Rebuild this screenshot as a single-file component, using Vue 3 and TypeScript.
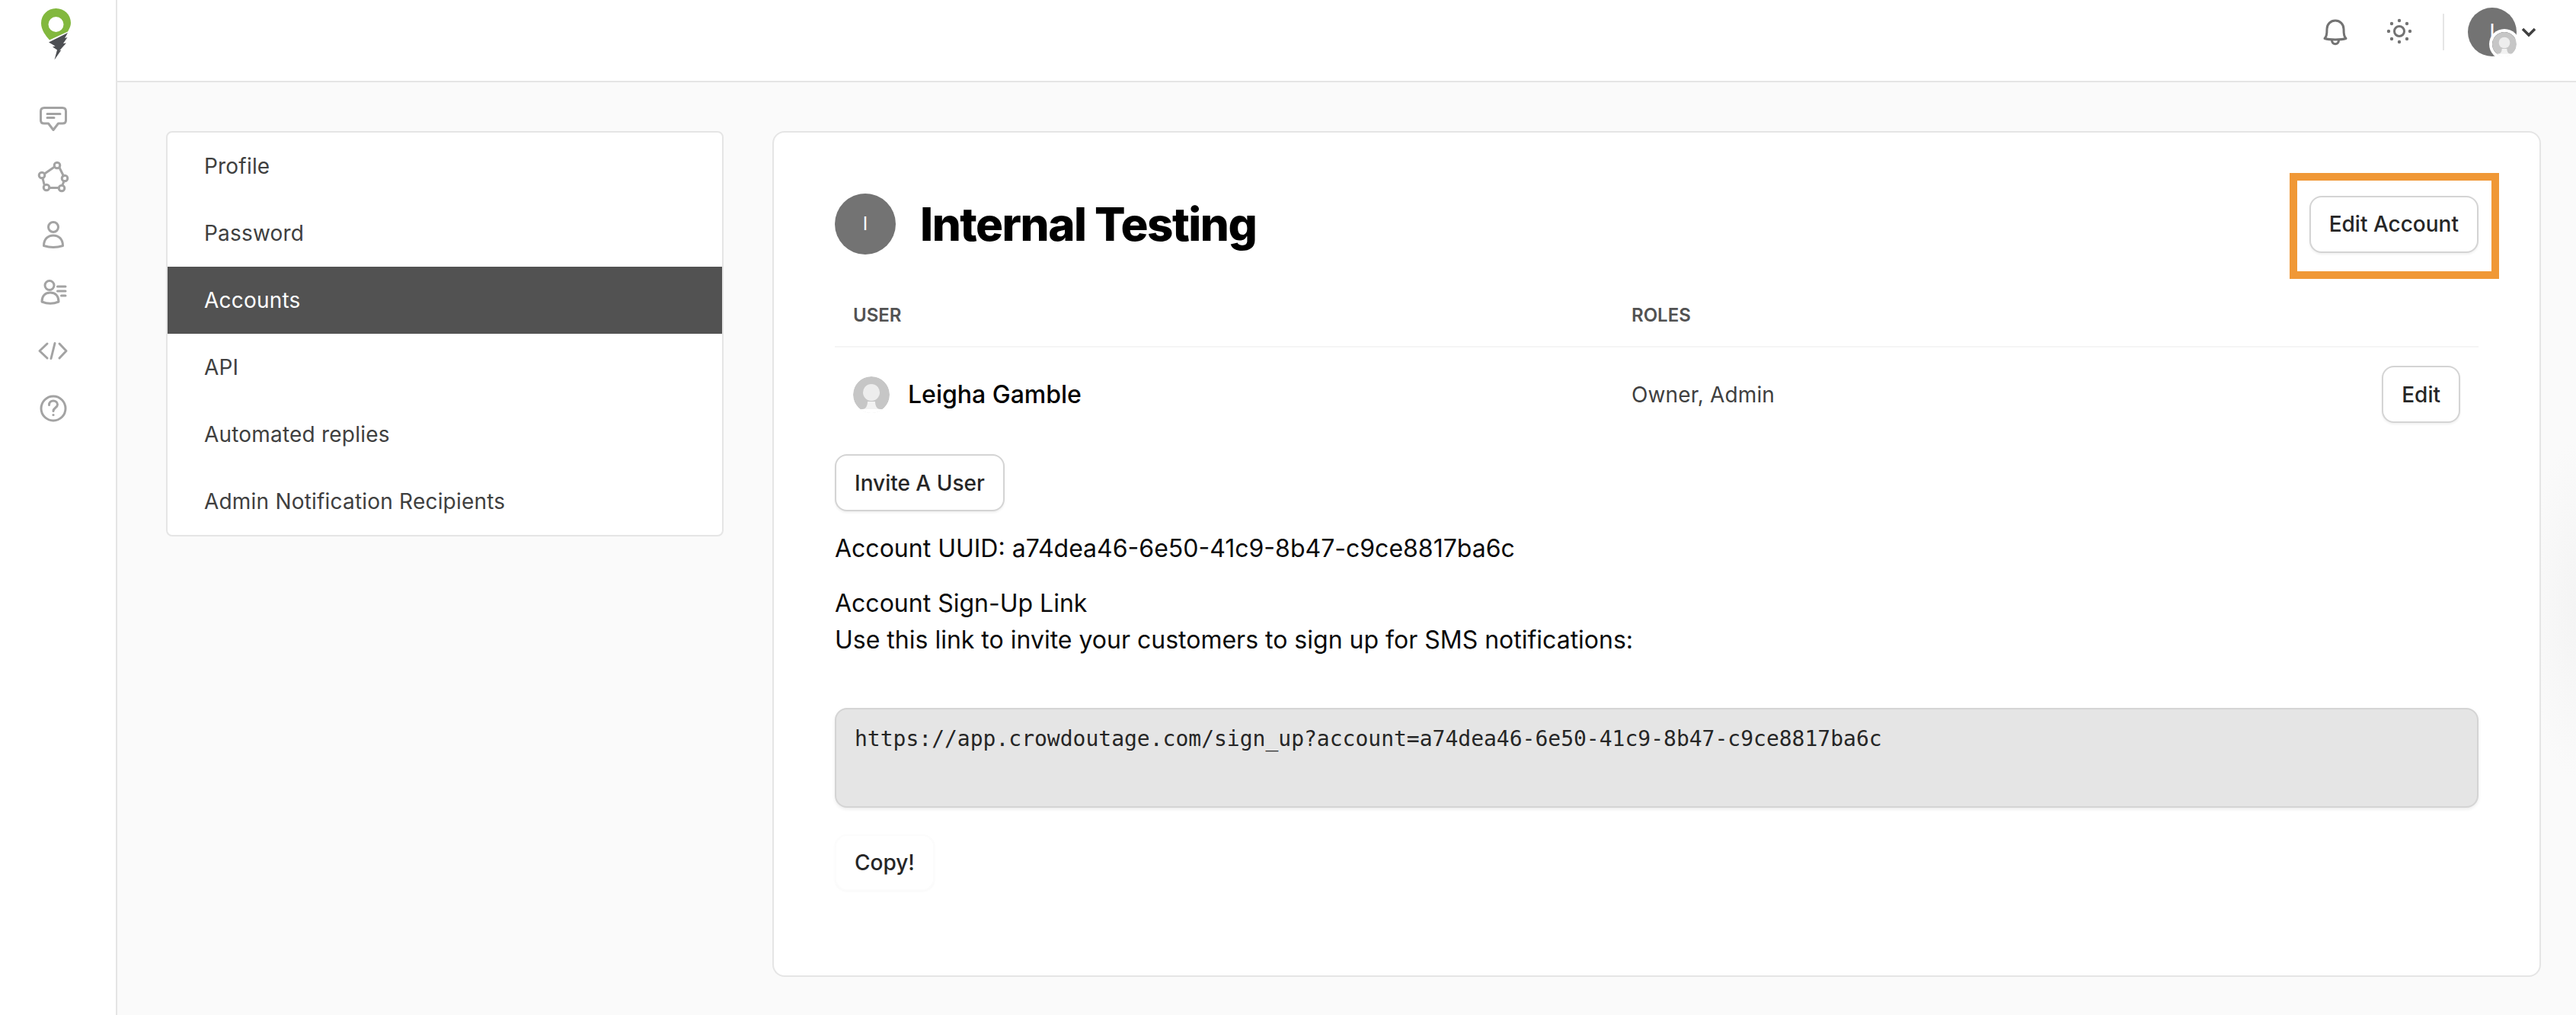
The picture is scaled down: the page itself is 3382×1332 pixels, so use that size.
<script setup lang="ts">
const navItems: string[] = ['Profile', 'Password', 'Accounts', 'API', 'Automated replies', 'Admin Notification Recipients']
const activeItem = 'Accounts'
const uuid = 'a74dea46-6e50-41c9-8b47-c9ce8817ba6c'
const signUpUrl = `https://app.crowdoutage.com/sign_up?account=${uuid}`
</script>

<template>
  <div class="app">
    <aside class="sidebar">
      <svg class="logo" width="48" height="80" viewBox="50 0 48 80">
        <path fill-rule="evenodd" fill="#82b83e" d="M73.5 11C84.5 11 93 19.5 93 30C93 34 91.5 37 89 41.5L65 52.5C60 47 54 39 54 30.5C54 19.5 62.5 11 73.5 11ZM73.5 22A10 10 0 1 0 73.5 42A10 10 0 1 0 73.5 22Z" />
        <path fill="#4d4f53" d="M64 55.5L89 43L85 50L88.5 49L83 57L87 56.5L78 66.5L80.5 65.5L71.5 78.5L75 65.5L69 61.5L72.5 60.5Z" />
      </svg>
      <nav class="side-icons">
        <svg class="side-icon" viewBox="48 134 44 44">
          <path d="M58 141.5H82C85 141.5 86.500 143 86.500 146V158C86.500 161 85 162 82 162H76.500L70 170.500L63.500 162H58C55 162 53.500 161 53.500 158V146C53.500 143 55 141.500 58 141.500Z" />
          <path d="M62 149.500H79M62 154.500H71" />
        </svg>
        <svg class="side-icon" viewBox="48 210 44 44">
          <path d="M71.500 219L58.500 228M78 220L83.500 231M84 237.500L82 243M77 246.500H65M58 242L56 234" />
          <circle cx="75" cy="217" r="3.800" />
          <circle cx="85" cy="234" r="3.800" />
          <circle cx="81" cy="247" r="3.800" />
          <circle cx="61" cy="246" r="3.800" />
          <circle cx="55" cy="230" r="3.800" />
        </svg>
        <svg class="side-icon" viewBox="48 286 44 44">
          <circle cx="70" cy="298" r="6.500" />
          <path d="M57.500 322.500C57.500 313.500 63 309 70 309C77 309 82.500 313.500 82.500 322.500C75 325 65 325 57.500 322.500Z" />
        </svg>
        <svg class="side-icon" viewBox="48 362 44 44">
          <circle cx="65" cy="374.500" r="6" />
          <path d="M55 396C55 387.500 60 384 66 384C72 384 77 387.500 77 396C70 399 62 399 55 396Z" />
          <path d="M75.500 376H86M75.500 382H86M80.500 388H86" />
        </svg>
        <svg class="side-icon" viewBox="48 438 44 44">
          <path d="M62 451L52 460.500L62 470M78 451L87 460.500L78 470M72 450.500L67 470.500" />
        </svg>
        <svg class="side-icon" viewBox="48 515 44 44">
          <circle cx="70" cy="537" r="16" />
          <path d="M64.500 532.500C64.500 529 67 527 70 527C73 527 75.500 529 75.500 532C75.500 536 70 536 70 540.500" />
          <circle class="dot" cx="70" cy="545.500" r="1.600" />
        </svg>
      </nav>
    </aside>

    <div class="content">
      <header class="topbar">
        <svg class="top-icon" viewBox="0 0 44 44">
          <path d="M8 31.500C10 29 11 27.500 11 19C11 12.500 16 8 22 8C28 8 33 12.500 33 19C33 27.500 34 29 36 31.500C30 33.500 14 33.500 8 31.500Z" />
          <path d="M17.500 34.500C18.500 40 25.500 40 26.500 34.500" />
        </svg>
        <svg class="top-icon sun" viewBox="0 0 44 44">
          <circle cx="22" cy="22" r="6.500" />
          <circle class="dot" cx="22" cy="8" r="2.200" />
          <circle class="dot" cx="22" cy="36" r="2.200" />
          <circle class="dot" cx="8" cy="22" r="2.200" />
          <circle class="dot" cx="36" cy="22" r="2.200" />
          <circle class="dot" cx="12" cy="12" r="2.200" />
          <circle class="dot" cx="32" cy="12" r="2.200" />
          <circle class="dot" cx="12" cy="32" r="2.200" />
          <circle class="dot" cx="32" cy="32" r="2.200" />
        </svg>
        <span class="top-divider"></span>
        <div class="account-avatar">
          I
          <svg class="mini-avatar" viewBox="0 0 48 48">
            <circle cx="24" cy="24" r="24" fill="#c6c6c6" />
            <circle cx="24" cy="21" r="11" fill="#ededed" />
            <path d="M2 48V43H12C17 43 19 38 19 33H29C29 38 31 43 36 43H46V48Z" fill="#f2f2f2" />
            <path d="M0 48V43H48V48Z" fill="#fff" />
          </svg>
        </div>
        <svg class="chevron" viewBox="0 0 24 24">
          <path d="M4 8L12 16L20 8" />
        </svg>
      </header>

      <main class="main">
        <ul class="settings-nav">
          <li v-for="item in navItems" :key="item" class="settings-item" :class="{ active: item === activeItem }">{{ item }}</li>
        </ul>

        <section class="card">
          <div class="card-head">
            <div class="account-badge">I</div>
            <h1 class="title">Internal Testing</h1>
            <div class="edit-account">
              <button class="btn" type="button">Edit Account</button>
              <span class="highlight"></span>
            </div>
          </div>

          <div class="table-row table-head">
            <span>USER</span>
            <span>ROLES</span>
          </div>
          <div class="table-row table-body">
            <div class="user">
              <svg class="user-avatar" viewBox="0 0 48 48">
                <circle cx="24" cy="24" r="24" fill="#c6c6c6" />
                <circle cx="24" cy="21" r="11" fill="#ededed" />
                <path d="M2 48V43H12C17 43 19 38 19 33H29C29 38 31 43 36 43H46V48Z" fill="#f2f2f2" />
                <path d="M0 48V43H48V48Z" fill="#fff" />
              </svg>
              <span class="user-name">Leigha Gamble</span>
            </div>
            <span class="roles">Owner, Admin</span>
            <button class="btn" type="button">Edit</button>
          </div>

          <button class="btn invite" type="button">Invite A User</button>
          <p class="uuid">Account UUID: {{ uuid }}</p>
          <p class="signup">Account Sign-Up Link<br />Use this link to invite your customers to sign up for SMS notifications:</p>
          <textarea class="link-box" readonly :value="signUpUrl"></textarea>
          <button class="btn copy" type="button">Copy!</button>
        </section>
      </main>
    </div>
  </div>
</template>

<style>
html, body {
  margin: 0;
  background: #fafafa;
}
</style>

<style scoped>
.app {
  display: flex;
  height: 1332px;
  overflow: hidden;
  font-family: Inter, "Liberation Sans", sans-serif;
  background: #fafafa;
}
.sidebar {
  box-sizing: border-box;
  flex: none;
  width: 154px;
  background: #fff;
  border-right: 2px solid #e5e5e5;
  display: flex;
  flex-direction: column;
  padding-left: 48px;
}
.logo {
  display: block;
  margin-left: 2px;
}
.side-icons {
  display: flex;
  flex-direction: column;
  gap: 32px;
  margin-top: 54px;
}
.side-icon {
  display: block;
  width: 44px;
  height: 44px;
  fill: none;
  stroke: #a3a3a3;
  stroke-width: 3;
  stroke-linecap: round;
  stroke-linejoin: round;
}
.dot {
  fill: currentColor;
  stroke: none;
}
.side-icon .dot {
  fill: #a3a3a3;
}
.content {
  flex: 1;
  min-width: 0;
  display: flex;
  flex-direction: column;
}
.topbar {
  box-sizing: border-box;
  flex: none;
  height: 108px;
  background: #fff;
  border-bottom: 2px solid #e5e5e5;
  display: flex;
  align-items: flex-start;
  justify-content: flex-end;
  padding: 10px 50px 0 0;
}
.top-icon {
  display: block;
  flex: none;
  width: 44px;
  height: 44px;
  margin: 9px 40px 0 0;
  fill: none;
  stroke: #737373;
  stroke-width: 3;
  stroke-linecap: round;
  stroke-linejoin: round;
}
.top-icon.sun {
  color: #737373;
  margin-right: 35px;
}
.top-divider {
  flex: none;
  width: 2px;
  height: 48px;
  margin: 8px 31px 0 0;
  background: #e5e5e5;
}
.account-avatar {
  position: relative;
  flex: none;
  width: 64px;
  height: 64px;
  border-radius: 50%;
  background: #737373;
  color: #fff;
  font-size: 28px;
  line-height: 64px;
  text-align: center;
}
.mini-avatar {
  position: absolute;
  left: 32px;
  top: 32px;
  width: 32px;
  height: 32px;
  border-radius: 50%;
  box-shadow: 0 0 0 4px #fff;
}
.chevron {
  display: block;
  flex: none;
  width: 24px;
  height: 24px;
  margin: 20px 0 0 4px;
  fill: none;
  stroke: #404040;
  stroke-width: 3.500;
}
.main {
  flex: 1;
  display: flex;
  align-items: flex-start;
  gap: 64px;
  padding: 64px 46px 0 64px;
  background: radial-gradient(ellipse 70px 220px at 100% 692px, #f4f4f4, #fafafa);
}
.settings-nav {
  box-sizing: border-box;
  flex: none;
  width: 732px;
  margin: 0;
  padding: 0;
  list-style: none;
  background: #fff;
  border: 2px solid #e5e5e5;
  border-radius: 8px;
  overflow: hidden;
}
.settings-item {
  height: 88px;
  padding-left: 48px;
  font-size: 28px;
  line-height: 89px;
  letter-spacing: 0.2px;
  color: #404040;
}
.settings-item.active {
  background: #525252;
  color: #fff;
}
.card {
  box-sizing: border-box;
  flex: 1;
  min-width: 0;
  height: 1110px;
  padding: 80px;
  background: #fff;
  border: 2px solid #e5e5e5;
  border-radius: 16px;
}
.card-head {
  display: flex;
  align-items: center;
  height: 80px;
}
.account-badge {
  flex: none;
  width: 80px;
  height: 80px;
  border-radius: 50%;
  background: #737373;
  color: #fff;
  font-size: 24px;
  line-height: 80px;
  text-align: center;
}
.title {
  flex: 1;
  margin: 0 0 0 32px;
  font-size: 60px;
  line-height: 80px;
  font-weight: 800;
  letter-spacing: -0.025em;
  color: #000;
}
.edit-account {
  position: relative;
  flex: none;
}
.highlight {
  position: absolute;
  left: -26px;
  right: -27px;
  top: -30px;
  bottom: -34px;
  border: 10px solid #f09836;
  pointer-events: none;
}
.btn {
  display: block;
  box-sizing: border-box;
  height: 75px;
  padding: 0 24px;
  background: #fff;
  border: 2px solid #d4d4d4;
  border-radius: 16px;
  box-shadow: 0 2px 3px rgba(0, 0, 0, 0.06);
  font-family: inherit;
  font-size: 28px;
  font-weight: 450;
  color: #262626;
}
.table-row {
  display: grid;
  grid-template-columns: 1022px 1fr auto;
  align-items: center;
  padding: 0 24px;
}
.table-head {
  padding-top: 62px;
  padding-bottom: 22px;
  font-size: 24px;
  line-height: 36px;
  font-weight: 600;
  color: #525252;
  border-bottom: 2px solid #f5f5f5;
}
.table-body {
  padding-top: 24px;
  padding-bottom: 25px;
}
.user {
  display: flex;
  align-items: center;
  gap: 24px;
}
.user-avatar {
  display: block;
  width: 48px;
  height: 48px;
  border-radius: 50%;
}
.user-name {
  font-size: 32px;
  font-weight: 450;
  color: #000;
}
.roles {
  font-size: 28px;
  letter-spacing: 0.15px;
  color: #404040;
}
.invite {
  margin-top: 16px;
}
.uuid, .signup {
  font-size: 32px;
  line-height: 48px;
  color: #0a0a0a;
}
.uuid {
  margin: 25px 0 0;
}
.signup {
  margin: 24px 0 0;
}
.link-box {
  display: block;
  box-sizing: border-box;
  width: 100%;
  height: 131px;
  margin-top: 65px;
  padding: 19px 24px;
  background: #e5e5e5;
  border: 2px solid #d4d4d4;
  border-radius: 16px;
  box-shadow: 0 2px 4px rgba(0, 0, 0, 0.08);
  font-family: "DejaVu Sans Mono", "Liberation Mono", monospace;
  font-size: 28px;
  line-height: 40px;
  color: #262626;
  resize: none;
  outline: none;
}
.copy {
  height: 74px;
  margin-top: 35px;
  border-color: #fcfcfc;
  box-shadow: 0 1px 3px rgba(0, 0, 0, 0.03);
}
</style>
